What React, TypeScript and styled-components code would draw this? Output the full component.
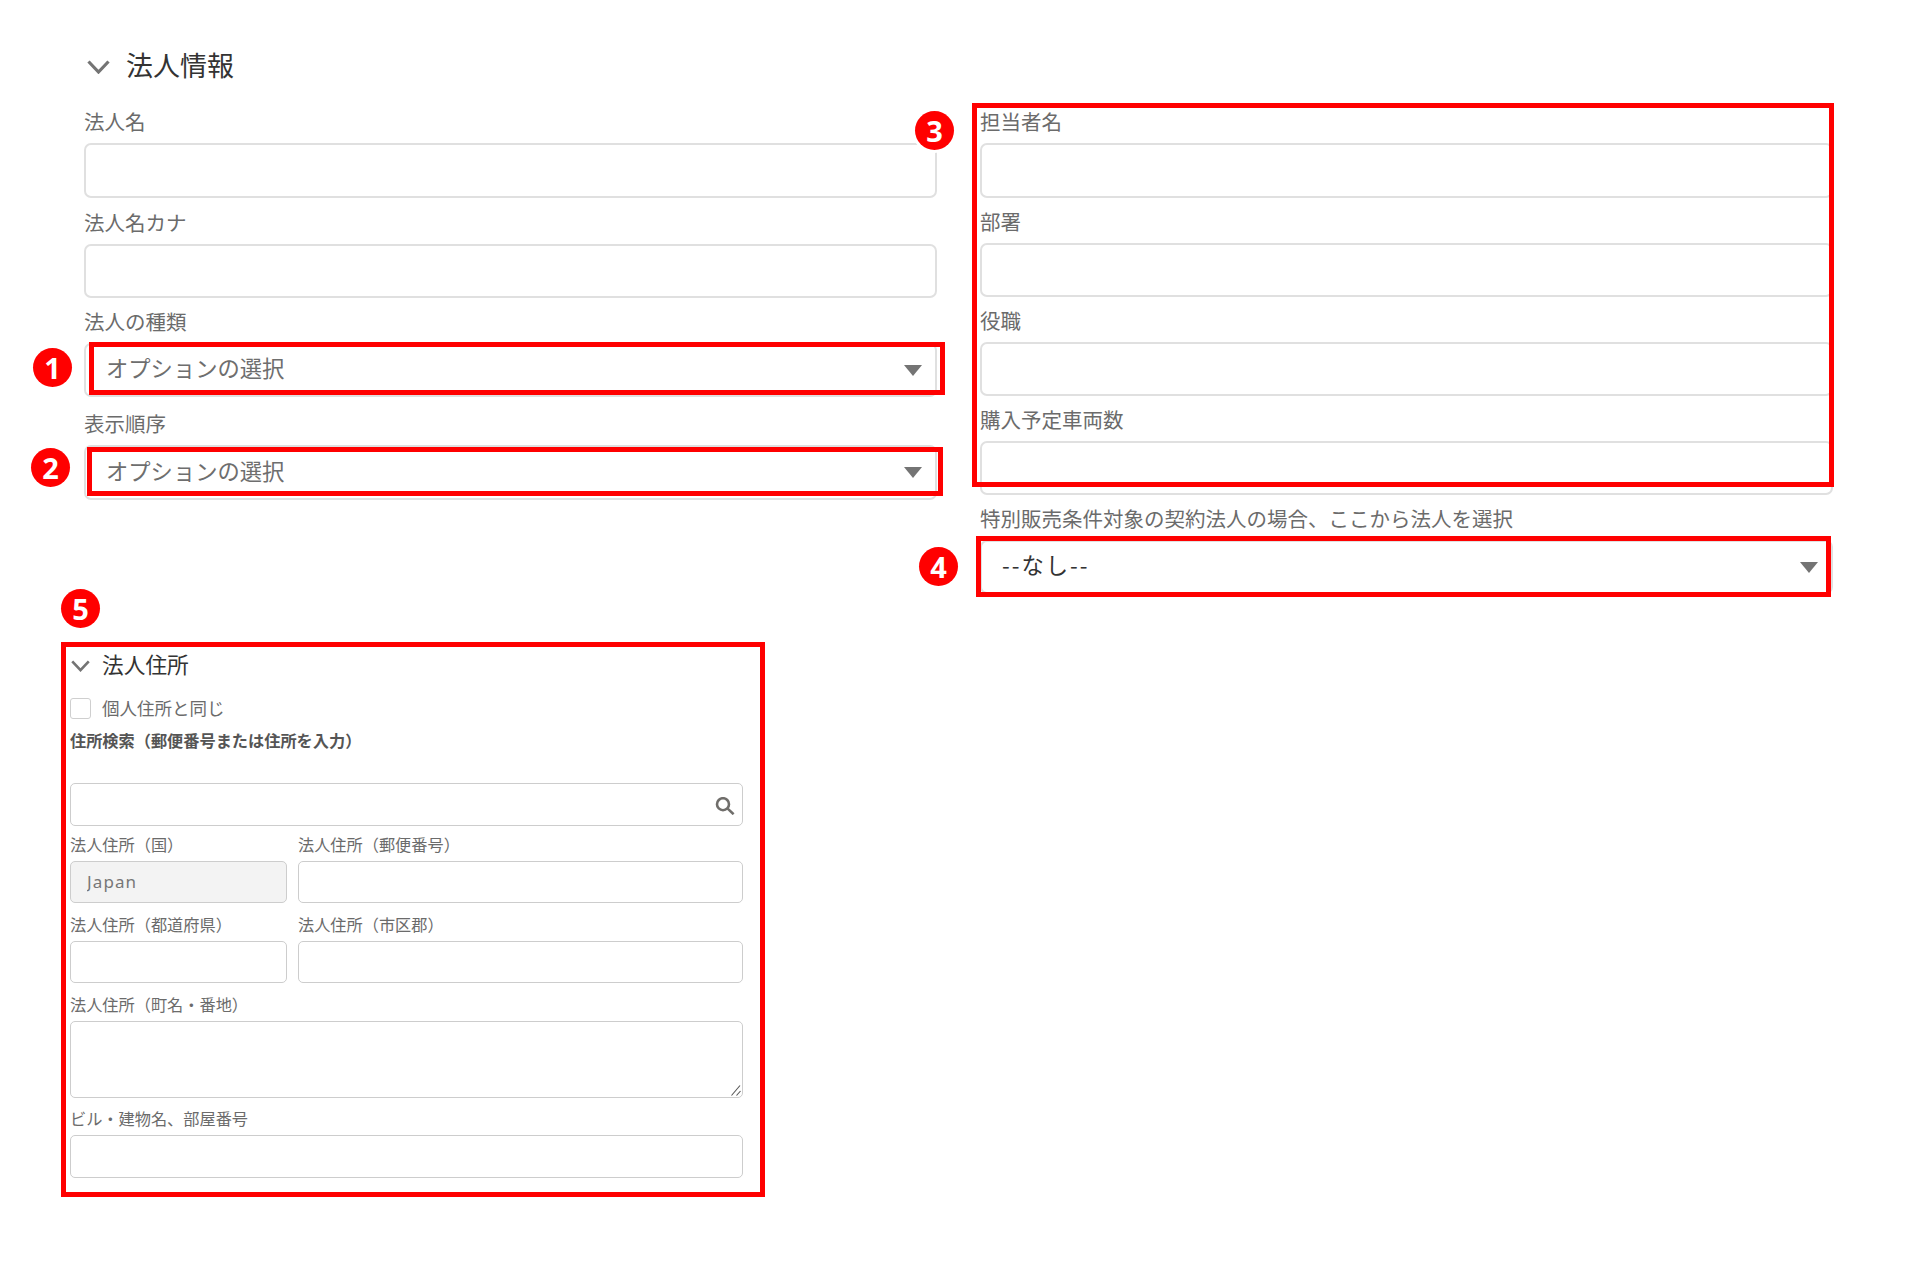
import React from "react";
import styled, { createGlobalStyle } from "styled-components";

const GlobalStyle = createGlobalStyle`
  html, body {
    margin: 0;
    padding: 0;
    background: #fff;
  }
  body {
    font-family: "Noto Sans CJK JP", "Noto Sans", sans-serif;
  }
`;

export default function App() {
  return (
    <Page>
      <GlobalStyle />
      <TopSection>
        <Column>
          <MainHeading>
            <Chevron $size={23} />
            <HeadingText>法人情報</HeadingText>
          </MainHeading>
          <Field $first>
            <FieldLabel>法人名</FieldLabel>
            <TextBox $h={55} />
          </Field>
          <Field $gap={13}>
            <FieldLabel>法人名カナ</FieldLabel>
            <TextBox />
          </Field>
          <Field>
            <FieldLabel>法人の種類</FieldLabel>
            <Select value="オプションの選択" />
          </Field>
          <Field $gap={15}>
            <FieldLabel>表示順序</FieldLabel>
            <Select value="オプションの選択" h={55} />
          </Field>
        </Column>

        <RightColumn>
          <Field $first>
            <FieldLabel>担当者名</FieldLabel>
            <TextBox $h={55} />
          </Field>
          <Field>
            <FieldLabel>部署</FieldLabel>
            <TextBox />
          </Field>
          <Field>
            <FieldLabel>役職</FieldLabel>
            <TextBox />
          </Field>
          <Field>
            <FieldLabel>購入予定車両数</FieldLabel>
            <TextBox />
          </Field>
          <Field>
            <FieldLabel>特別販売条件対象の契約法人の場合、ここから法人を選択</FieldLabel>
            <Select value="--なし--" dark />
          </Field>
        </RightColumn>
      </TopSection>

      <AddressSection>
        <SubHeading>
          <Chevron $size={19} />
          <HeadingText>法人住所</HeadingText>
        </SubHeading>
        <CheckRow>
          <CheckBox type="checkbox" />
          <CheckLabel>個人住所と同じ</CheckLabel>
        </CheckRow>
        <SearchLabel>住所検索（郵便番号または住所を入力）</SearchLabel>
        <SearchWrap>
          <SmallBox />
          <SearchIcon viewBox="0 0 20 18" aria-hidden="true">
            <circle cx="8" cy="7.2" r="6" />
            <line x1="12.4" y1="11.4" x2="18.6" y2="17.2" />
          </SearchIcon>
        </SearchWrap>
        <AddressGrid>
          <SmallField>
            <SmallLabel>法人住所（国）</SmallLabel>
            <SmallBox $disabled defaultValue="Japan" readOnly />
          </SmallField>
          <SmallField>
            <SmallLabel>法人住所（郵便番号）</SmallLabel>
            <SmallBox />
          </SmallField>
          <SmallField>
            <SmallLabel>法人住所（都道府県）</SmallLabel>
            <SmallBox />
          </SmallField>
          <SmallField>
            <SmallLabel>法人住所（市区郡）</SmallLabel>
            <SmallBox />
          </SmallField>
        </AddressGrid>
        <SmallField>
          <SmallLabel>法人住所（町名・番地）</SmallLabel>
          <AreaWrap>
            <AreaBox />
            <Grip viewBox="0 0 10 11" aria-hidden="true">
              <line x1="0.5" y1="10.5" x2="9" y2="0.5" />
              <line x1="5.5" y1="10.5" x2="9.5" y2="6" />
            </Grip>
          </AreaWrap>
        </SmallField>
        <SmallField $gap={9}>
          <SmallLabel>ビル・建物名、部屋番号</SmallLabel>
          <SmallBox $h={43} />
        </SmallField>
      </AddressSection>

      {frames.map((f, i) => (
        <Frame key={i} $x={f.x} $y={f.y} $w={f.w} $h={f.h} />
      ))}
      {badges.map((b) => (
        <Badge key={b.n} $x={b.x} $y={b.y}>
          {b.n}
        </Badge>
      ))}
    </Page>
  );
}

// annotations drawn over the form

const frames = [
  { x: 89, y: 342, w: 856, h: 53 },
  { x: 87, y: 447, w: 856, h: 49 },
  { x: 972, y: 103, w: 862, h: 384 },
  { x: 976, y: 536, w: 855, h: 61 },
  { x: 61, y: 642, w: 704, h: 555 }
];

const badges = [
  { n: 1, x: 33, y: 348 },
  { n: 2, x: 31, y: 448 },
  { n: 3, x: 915, y: 111 },
  { n: 4, x: 919, y: 547 },
  { n: 5, x: 61, y: 589 }
];

function Select({ value, h, dark }: { value: string; h?: number; dark?: boolean }) {
  return (
    <SelectBox $h={h}>
      <SelectText $dark={dark}>{value}</SelectText>
      <Arrow />
    </SelectBox>
  );
}

function Chevron({ $size }: { $size: number }) {
  return (
    <ChevronSvg $size={$size} viewBox="0 0 23 14" aria-hidden="true">
      <polyline points="1.5,1.5 11.5,12 21.5,1.5" />
    </ChevronSvg>
  );
}

const Page = styled.div`
  position: relative;
  width: 1920px;
  height: 1273px;
  overflow: hidden;
  background: #fff;
  padding-top: 48px;
  box-sizing: border-box;
`;

const TopSection = styled.div`
  display: grid;
  grid-template-columns: 853px 853px;
  column-gap: 43px;
  padding-left: 84px;
  align-items: start;
`;

const Column = styled.div`
  display: flex;
  flex-direction: column;
`;

const RightColumn = styled(Column)`
  padding-top: 62px;
`;

const MainHeading = styled.h2`
  display: flex;
  align-items: center;
  gap: 16px;
  margin: 0 0 26px 3px;
  height: 36px;
  font-size: 27px;
  line-height: 36px;
  font-weight: 400;
  color: #333;
`;

const HeadingText = styled.span`
  padding-bottom: 3px;
`;

const ChevronSvg = styled.svg<{ $size: number }>`
  width: ${(p) => p.$size}px;
  height: ${(p) => Math.round((p.$size * 14) / 23)}px;
  flex: none;
  margin-top: 2px;
  fill: none;
  stroke: #747474;
  stroke-width: 3.2;
`;

const Field = styled.div<{ $first?: boolean; $gap?: number }>`
  display: flex;
  flex-direction: column;
  gap: 9px;
  margin-top: ${(p) => (p.$first ? 0 : p.$gap ?? 12)}px;
`;

const FieldLabel = styled.label`
  display: block;
  height: 24px;
  font-size: 20.5px;
  line-height: 22px;
  color: #6b6b6b;
  white-space: nowrap;
`;

const TextBox = styled.input<{ $h?: number }>`
  display: block;
  box-sizing: border-box;
  width: 100%;
  height: ${(p) => p.$h ?? 54}px;
  border: 2px solid #e0e0e0;
  border-radius: 7px;
  background: #fff;
  outline: none;
`;

const SelectBox = styled.div<{ $h?: number }>`
  display: flex;
  align-items: center;
  justify-content: space-between;
  box-sizing: border-box;
  height: ${(p) => p.$h ?? 54}px;
  padding: 0 13px 0 20px;
  border: 2px solid #e0e0e0;
  border-radius: 7px;
  background: #fff;
`;

const SelectText = styled.span<{ $dark?: boolean }>`
  font-size: 22.3px;
  line-height: 1;
  padding-bottom: 5px;
  letter-spacing: ${(p) => (p.$dark ? "2px" : "0")};
  color: ${(p) => (p.$dark ? "#333" : "#6e6e6e")};
`;

const Arrow = styled.span`
  width: 0;
  height: 0;
  border-left: 9px solid transparent;
  border-right: 9px solid transparent;
  border-top: 11px solid #747474;
`;

const AddressSection = styled.section`
  display: flex;
  flex-direction: column;
  width: 673px;
  margin: 56px 0 0 70px;
`;

const SubHeading = styled.h3`
  display: flex;
  align-items: center;
  gap: 12px;
  margin: 0 0 18px 1px;
  height: 30px;
  font-size: 21.7px;
  line-height: 30px;
  font-weight: 400;
  color: #333;
`;

const CheckRow = styled.div`
  display: flex;
  align-items: center;
  gap: 11px;
  height: 21px;
`;

const CheckBox = styled.input`
  appearance: none;
  width: 21px;
  height: 21px;
  margin: 0;
  border: 1px solid #cfcfcf;
  border-radius: 3px;
  background: #fff;
`;

const CheckLabel = styled.span`
  font-size: 17.5px;
  line-height: 21px;
  padding-bottom: 3px;
  color: #6b6b6b;
`;

const SearchLabel = styled.div`
  margin: 10px 0 32px;
  font-size: 16.2px;
  line-height: 22px;
  font-weight: 700;
  color: #555;
`;

const SearchWrap = styled.div`
  position: relative;
  height: 43px;
`;

const SearchIcon = styled.svg`
  position: absolute;
  right: 8px;
  top: 14px;
  width: 20px;
  height: 18px;
  fill: none;
  stroke: #706e6b;
  stroke-width: 2.6;
`;

const SmallBox = styled.input<{ $disabled?: boolean; $h?: number }>`
  display: block;
  box-sizing: border-box;
  width: 100%;
  height: ${(p) => p.$h ?? 42}px;
  padding: 0 16px 2px;
  border: 1px solid #cdcdcd;
  border-radius: 5px;
  outline: none;
  background: ${(p) => (p.$disabled ? "#f3f3f3" : "#fff")};
  font-family: "Noto Sans", "Open Sans", sans-serif;
  font-size: 17px;
  letter-spacing: 1.1px;
  color: #777;
  ${SearchWrap} & {
    height: 43px;
  }
`;

const AreaWrap = styled.div`
  position: relative;
  height: 77px;
`;

const AreaBox = styled.textarea`
  display: block;
  box-sizing: border-box;
  width: 100%;
  height: 77px;
  border: 1px solid #cdcdcd;
  border-radius: 5px;
  outline: none;
  background: #fff;
  resize: none;
`;

const Grip = styled.svg`
  position: absolute;
  right: 2px;
  bottom: 2px;
  width: 10px;
  height: 11px;
  fill: none;
  stroke: #555;
  stroke-width: 1.1;
`;

const AddressGrid = styled.div`
  display: grid;
  grid-template-columns: 217px 445px;
  column-gap: 11px;
`;

const SmallField = styled.div<{ $gap?: number }>`
  display: flex;
  flex-direction: column;
  gap: 6px;
  margin-top: ${(p) => p.$gap ?? 10}px;
  ${AddressGrid} > &:nth-child(-n + 2) {
    margin-top: 7px;
  }
`;

const SmallLabel = styled.label`
  font-size: 16.2px;
  line-height: 22px;
  color: #6b6b6b;
  white-space: nowrap;
`;

const Frame = styled.div<{ $x: number; $y: number; $w: number; $h: number }>`
  position: absolute;
  left: ${(p) => p.$x}px;
  top: ${(p) => p.$y}px;
  width: ${(p) => p.$w}px;
  height: ${(p) => p.$h}px;
  box-sizing: border-box;
  border: 5px solid #ff0000;
  pointer-events: none;
`;

const Badge = styled.div<{ $x: number; $y: number }>`
  position: absolute;
  left: ${(p) => p.$x}px;
  top: ${(p) => p.$y}px;
  display: flex;
  align-items: center;
  justify-content: center;
  width: 39px;
  height: 39px;
  border-radius: 50%;
  background: #ff0000;
  box-shadow: 0 0 0 3px #fff;
  font-family: "Noto Sans", sans-serif;
  font-size: 29px;
  font-weight: 700;
  line-height: 1;
  color: #fff;
`;
